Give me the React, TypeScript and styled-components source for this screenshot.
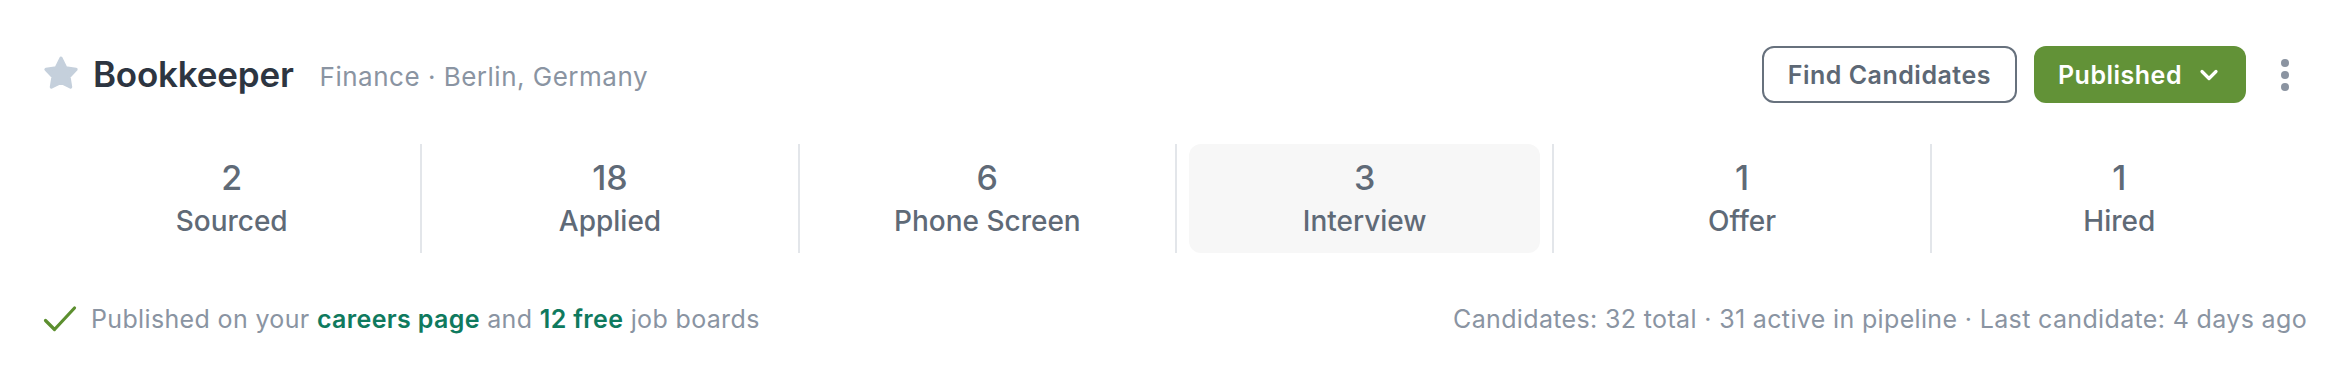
import React from "react";
import styled, { createGlobalStyle } from "styled-components";

const Global = createGlobalStyle`
  html, body { margin: 0; padding: 0; background: #ffffff; }
  body { font-family: Inter, "Noto Sans", "Liberation Sans", sans-serif; -webkit-font-smoothing: antialiased; }
  * { box-sizing: border-box; }
`;

const Page = styled.div`
  width: 2350px;
  height: 380px;
  padding: 46px 43px 0 43px;
  display: flex;
  flex-direction: column;
`;

const Header = styled.div`
  display: flex;
  align-items: center;
  justify-content: space-between;
  height: 57px;
`;

const TitleGroup = styled.div`
  display: flex;
  align-items: center;
`;

const StarIcon = styled.svg`
  width: 36px;
  height: 36px;
  margin-right: 14px;
  margin-top: -4px;
  flex: none;
`;

const Title = styled.h1`
  margin: 0;
  font-size: 35px;
  font-weight: 600;
  color: #2d3541;
  letter-spacing: -0.2px;
  line-height: 1;
`;

const Subtitle = styled.span`
  margin-left: 26px;
  font-size: 26px;
  font-weight: 400;
  letter-spacing: 0.5px;
  color: #8a94a2;
  line-height: 1;
  margin-top: 4px;
`;

const Actions = styled.div`
  display: flex;
  align-items: center;
  gap: 17px;
`;

const Button = styled.button<{ $primary?: boolean }>`
  height: 57px;
  padding: 0 ${(p) => (p.$primary ? "27px 0 24px" : "24px")};
  border-radius: 12px;
  font-family: Inter, "Noto Sans", "Liberation Sans", sans-serif;
  font-size: 25px;
  font-weight: 600;
  letter-spacing: 0.5px;
  display: flex;
  align-items: center;
  gap: 17px;
  cursor: pointer;
  border: ${(p) => (p.$primary ? "none" : "2px solid #67717d")};
  background: ${(p) => (p.$primary ? "#629237" : "#ffffff")};
  color: ${(p) => (p.$primary ? "#ffffff" : "#5d6875")};
`;

const Kebab = styled.button`
  width: 44px;
  height: 44px;
  border: none;
  background: transparent;
  padding: 0;
  display: flex;
  flex-direction: column;
  align-items: center;
  justify-content: center;
  gap: 4px;
  cursor: pointer;
`;

const Dot = styled.span`
  width: 8px;
  height: 8px;
  border-radius: 50%;
  background: #8b94a1;
`;

const Stages = styled.div`
  display: grid;
  grid-template-columns: repeat(6, 1fr);
  margin-top: 41px;
  height: 109px;
`;

const StageCell = styled.div<{ $first?: boolean }>`
  border-left: ${(p) => (p.$first ? "none" : "2px solid #e3e6ea")};
  padding: 0 12px;
  display: flex;
`;

const StageInner = styled.div<{ $active?: boolean }>`
  flex: 1;
  border-radius: 12px;
  background: ${(p) => (p.$active ? "#f7f7f7" : "transparent")};
  display: flex;
  flex-direction: column;
  align-items: center;
  justify-content: center;
  gap: 6px;
  padding-bottom: 2px;
  color: #5f6a77;
`;

const StageCount = styled.div`
  font-size: 34px;
  font-weight: 500;
  line-height: 40px;
`;

const StageLabel = styled.div`
  font-size: 28px;
  font-weight: 500;
  line-height: 34px;
`;

const Footer = styled.div`
  display: flex;
  align-items: center;
  justify-content: space-between;
  margin-top: 51px;
  font-size: 25px;
  letter-spacing: 0.35px;
  color: #8a94a2;
`;

const PublishedNote = styled.div`
  display: flex;
  align-items: center;
`;

const CheckIcon = styled.svg`
  width: 34px;
  height: 28px;
  margin-right: 14px;
  flex: none;
`;

const Link = styled.a`
  color: #0f7a5e;
  font-weight: 600;
  text-decoration: none;
`;

const Stats = styled.div``;

const stages = [
  { count: 2, label: "Sourced" },
  { count: 18, label: "Applied" },
  { count: 6, label: "Phone Screen" },
  { count: 3, label: "Interview", active: true },
  { count: 1, label: "Offer" },
  { count: 1, label: "Hired" },
];

export default function App() {
  return (
    <>
      <Global />
      <Page>
        <Header>
          <TitleGroup>
            <StarIcon viewBox="0 0 24 24">
              <path
                d="M12 2.2L15.2 8.6L22 9.6L17.3 14.5L18.4 21.4L12 18.2L5.6 21.4L6.7 14.5L2 9.6L8.8 8.6Z"
                fill="#c5d0dc"
                stroke="#c5d0dc"
                strokeWidth="2.2"
                strokeLinejoin="round"
              />
            </StarIcon>
            <Title>Bookkeeper</Title>
            <Subtitle>Finance · Berlin, Germany</Subtitle>
          </TitleGroup>
          <Actions>
            <Button>Find Candidates</Button>
            <Button $primary>
              Published
              <svg width="20" height="14" viewBox="0 0 20 14">
                <path d="M3 3.5l7 7 7-7" fill="none" stroke="#ffffff" strokeWidth="3.2" strokeLinecap="round" strokeLinejoin="round" />
              </svg>
            </Button>
            <Kebab aria-label="More">
              <Dot />
              <Dot />
              <Dot />
            </Kebab>
          </Actions>
        </Header>
        <Stages>
          {stages.map((s, i) => (
            <StageCell key={s.label} $first={i === 0}>
              <StageInner $active={s.active}>
                <StageCount>{s.count}</StageCount>
                <StageLabel>{s.label}</StageLabel>
              </StageInner>
            </StageCell>
          ))}
        </Stages>
        <Footer>
          <PublishedNote>
            <CheckIcon viewBox="0 0 34 28">
              <path d="M2.5 15.5l9 9L31.5 3" fill="none" stroke="#5c8f2f" strokeWidth="3.2" strokeLinecap="round" strokeLinejoin="round" />
            </CheckIcon>
            <span>
              Published on your <Link href="#">careers page</Link> and <Link href="#">12 free</Link> job boards
            </span>
          </PublishedNote>
          <Stats>Candidates: 32 total · 31 active in pipeline · Last candidate: 4 days ago</Stats>
        </Footer>
      </Page>
    </>
  );
}
